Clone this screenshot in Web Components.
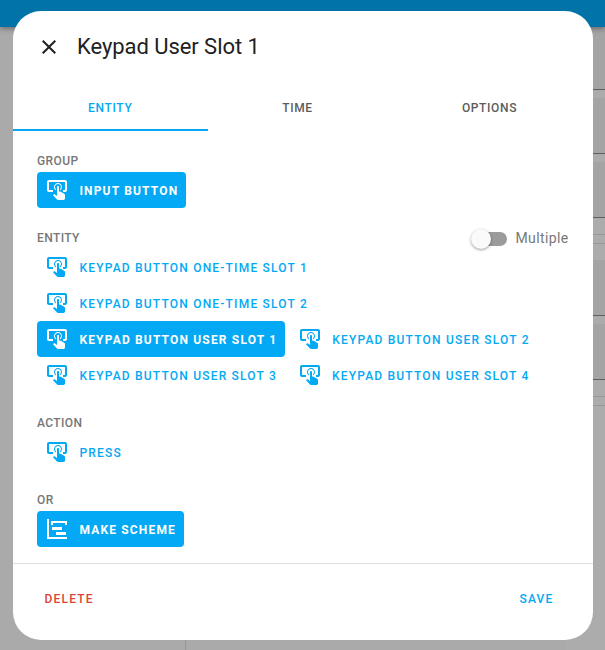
<!DOCTYPE html>
<html lang="en">
<head>
<meta charset="utf-8">
<title>Keypad User Slot 1</title>
<style>
html, body { margin: 0; height: 100%; overflow: hidden; font-family: Roboto, sans-serif; }
</style>
</head>
<body>
<scheduler-page>
  <editor-dialog heading="Keypad User Slot 1">
    <tab-bar slot="tabs">
      <tab-item active style="--w:194.5px">ENTITY</tab-item>
      <tab-item style="--w:180px">TIME</tab-item>
      <tab-item style="--w:204px">OPTIONS</tab-item>
    </tab-bar>
    <option-group label="GROUP">
      <icon-button icon="tap" active>INPUT BUTTON</icon-button>
    </option-group>
    <option-group label="ENTITY">
      <toggle-switch slot="extra">Multiple</toggle-switch>
      <icon-button icon="tap">KEYPAD BUTTON ONE-TIME SLOT 1</icon-button>
      <icon-button icon="tap">KEYPAD BUTTON ONE-TIME SLOT 2</icon-button>
      <icon-button icon="tap" active>KEYPAD BUTTON USER SLOT 1</icon-button>
      <icon-button icon="tap">KEYPAD BUTTON USER SLOT 2</icon-button>
      <icon-button icon="tap">KEYPAD BUTTON USER SLOT 3</icon-button>
      <icon-button icon="tap">KEYPAD BUTTON USER SLOT 4</icon-button>
    </option-group>
    <option-group label="ACTION">
      <icon-button icon="tap">PRESS</icon-button>
    </option-group>
    <option-group label="OR">
      <icon-button icon="gantt" active>MAKE SCHEME</icon-button>
    </option-group>
    <text-action slot="secondary" style="--c:#db4437">DELETE</text-action>
    <text-action slot="primary">SAVE</text-action>
  </editor-dialog>
</scheduler-page>
<script>
const ICONS = {
  close: 'M19,6.41L17.59,5L12,10.59L6.41,5L5,6.41L10.59,12L5,17.59L6.41,19L12,13.41L17.59,19L19,17.59L13.41,12L19,6.41Z',
  tap: 'M13 5C15.21 5 17 6.79 17 9C17 10.5 16.2 11.77 15 12.46V11.24C15.61 10.69 16 9.89 16 9C16 7.34 14.66 6 13 6S10 7.34 10 9C10 9.89 10.39 10.69 11 11.24V12.46C9.8 11.77 9 10.5 9 9C9 6.79 10.79 5 13 5M20 20.5C19.97 21.32 19.32 21.97 18.5 22H13C12.62 22 12.26 21.85 12 21.57L8 17.37L8.74 16.6C8.93 16.39 9.2 16.28 9.5 16.28H9.7L12 18V9C12 8.45 12.45 8 13 8S14 8.45 14 9V13.47L15.21 13.6L19.15 15.79C19.68 16.03 20 16.56 20 17.14V20.5M20 2H4C2.9 2 2 2.9 2 4V12C2 13.11 2.9 14 4 14H8V12L4 12L4 4H20L20 12H18V14H20V13.99L20 14C21.1 14 22 13.11 22 12V4C22 2.9 21.1 2 20 2Z',
  gantt: 'M2,2H4V20H22V22H2V2M7,10H17V13H7V10M11,15H21V18H11V15M6,4H22V8H20V6H8V8H6V4Z'
};
const svg = n => `<svg width="24" height="24" viewBox="0 0 24 24" fill="currentColor"><path d="${ICONS[n]}"/></svg>`;
function define(name, render) {
  customElements.define(name, class extends HTMLElement {
    constructor() { super(); this.attachShadow({ mode: 'open' }); }
    connectedCallback() { this.shadowRoot.innerHTML = render(this); }
  });
}

define('scheduler-page', () => `<style>
:host { display: block; position: relative; height: 100vh; box-sizing: border-box; padding: 11px 12px 10px 13px; background: #aaa; overflow: hidden; }
.bar { position: absolute; inset: 0 0 auto 0; height: 27px; background: #0173a9; box-shadow: 0 1px 6px rgba(0,0,0,.45); z-index: 1; }
.side { position: absolute; top: 27px; right: 0; width: 40px; display: grid; grid-template-rows: 63px 64px 64px 98px 64px 270px; background: #a4a4a4; }
.side i { border-bottom: 1px solid #5e5e5e; background: linear-gradient(#ababab 8px, #a4a4a4 8px); }
.side i:first-child { background: #a4a4a4; }
.side .gap { background: linear-gradient(#acacac 16px, #979797 16px 17px, #acacac 17px 25px, #979797 25px 26px, #acacac 26px 42px, #a4a4a4 42px); }
.side .last { border: 0; background: linear-gradient(#acacac 16px, #979797 16px 17px, #acacac 17px 25px, #979797 25px 26px, #acacac 26px); }
.foot { position: absolute; left: 185px; bottom: 0; width: 1px; height: 12px; background: #989898; }
::slotted(*) { position: relative; z-index: 2; }
</style><div class="bar"></div><div class="side"><i></i><i></i><i></i><i class="gap"></i><i></i><i class="last"></i></div><div class="foot"></div><slot></slot>`);

define('editor-dialog', el => `<style>
:host { display: flex; flex-direction: column; height: 100%; background: #fff; border-radius: 28px; overflow: hidden; }
header { display: flex; align-items: center; height: 48px; padding: 12px 24px; color: #212121; }
header svg { display: block; }
h1 { margin: 0 0 0 16px; font-weight: 400; font-size: 22px; line-height: 28px; letter-spacing: -.06px; }
main { flex: 1; padding: 20px 24px 0; }
footer { height: 77px; flex: none; box-sizing: border-box; border-top: 1px solid #dedede; display: flex; justify-content: space-between; align-items: center; padding: 0 39.5px 7px 31.5px; }
</style><header>${svg('close')}<h1>${el.getAttribute('heading')}</h1></header>
<slot name="tabs"></slot><main><slot></slot></main>
<footer><slot name="secondary"></slot><slot name="primary"></slot></footer>`);

define('tab-bar', () => `<style>:host { display: flex; height: 48px; }</style><slot></slot>`);
define('tab-item', () => `<style>
:host { display: flex; flex: 0 0 var(--w); box-sizing: border-box; height: 48px; align-items: center; justify-content: center; border-bottom: 2px solid transparent; color: #5c5c5c; font: 500 12px/20px Roboto, sans-serif; letter-spacing: .65px; padding-top: 4px; }
:host([active]) { color: #03a9f4; border-color: #03a9f4; }
</style><slot></slot>`);

define('option-group', el => `<style>
:host { display: block; margin-bottom: 20px; }
:host(:last-of-type) { margin-bottom: 0; }
.head { height: 20px; padding-bottom: 1px; display: flex; justify-content: space-between; align-items: center; font: 500 12px/20px Roboto, sans-serif; letter-spacing: .4px; color: #777; }
.items { display: flex; flex-wrap: wrap; column-gap: 4.5px; padding-right: 16px; }
</style><div class="head"><span>${el.getAttribute('label')}</span><slot name="extra"></slot></div><div class="items"><slot></slot></div>`);

define('icon-button', el => `<style>
:host { display: inline-flex; align-items: center; height: 36px; box-sizing: border-box; padding: 0 8px; border-radius: 4px; color: #03a9f4; font: 500 12px/34px Roboto, sans-serif; letter-spacing: 1.2px; white-space: nowrap; }
:host([active]) { background: #03a9f4; color: #fff; font-weight: 700; letter-spacing: 1.17px; }
svg { margin-right: 10.4px; flex: none; }
span { padding-top: 2px; }
</style>${svg(el.getAttribute('icon'))}<span><slot></slot></span>`);

define('toggle-switch', () => `<style>
:host { display: flex; align-items: center; gap: 8px; margin-right: .4px; font: 400 14px/20px Roboto, sans-serif; letter-spacing: .4px; color: #777; }
.track { width: 32px; height: 14px; border-radius: 7px; background: #9b9b9b; margin-top: 2px; display: flex; align-items: center; }
.thumb { flex: none; width: 20px; height: 20px; margin-left: -4px; border-radius: 50%; background: #fafafa; box-shadow: 0 1px 3px rgba(0,0,0,.4); }
</style><span class="track"><span class="thumb"></span></span><span><slot></slot></span>`);

define('text-action', () => `<style>
:host { display: block; color: var(--c, #03a9f4); font: 500 12px/36px Roboto, sans-serif; letter-spacing: 1.2px; }
</style><slot></slot>`);
</script>
</body>
</html>
